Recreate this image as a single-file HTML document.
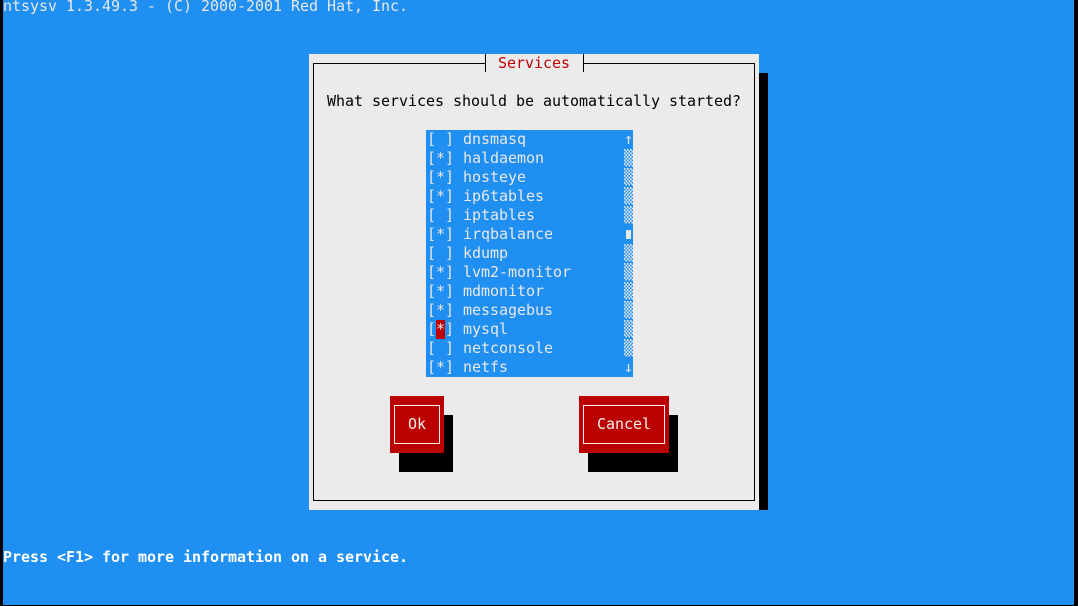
<!DOCTYPE html>
<html><head><meta charset="utf-8"><style>
*{margin:0;padding:0}
body{width:1078px;height:606px;overflow:hidden;background:#1f8ff2;position:relative;font-family:"DejaVu Sans Mono","Liberation Mono",monospace;font-size:15px;line-height:19px;letter-spacing:-0.03px}
.a{position:absolute;white-space:pre}
</style></head><body>
<div class="a" style="left:0;top:0;width:3px;height:606px;background:#000"></div>
<div class="a" style="right:0;top:0;width:4px;height:606px;background:#000"></div>
<div class="a" style="left:0;top:605px;width:1078px;height:1px;background:#000"></div>
<div class="a" style="left:3px;top:-3px;color:#e8e8e8">ntsysv 1.3.49.3 - (C) 2000-2001 Red Hat, Inc.</div>

<div class="a" style="left:759px;top:73px;width:9px;height:437px;background:#000"></div>
<div class="a" style="left:309px;top:54px;width:450px;height:456px;background:#ebebeb"></div>
<div class="a" style="left:313px;top:63px;width:440px;height:436px;border:1px solid #000"></div>
<div class="a" style="left:485px;top:54px;width:97px;height:18px;background:#ebebeb;border-left:1px solid #000;border-right:1px solid #000"></div>
<div class="a" style="left:498px;top:54px;color:#c00000">Services</div>
<div class="a" style="left:327px;top:92px;color:#000">What services should be automatically started?</div>

<div class="a" style="left:426px;top:130px;width:207px;height:247px;background:#1f8ff2"></div>
<div class="a" style="left:427px;top:130px;color:#e8e8e8">[ ] dnsmasq
[*] haldaemon
[*] hosteye
[*] ip6tables
[ ] iptables
[*] irqbalance
[ ] kdump
[*] lvm2-monitor
[*] mdmonitor
[*] messagebus
[ ] mysql
[ ] netconsole
[*] netfs</div>
<div class="a" style="left:436px;top:320px;width:9px;height:19px;background:#c00000;color:#e8e8e8;text-align:center">*</div>
<div class="a" style="left:624px;top:130px;width:9px;color:#e8e8e8;text-align:center">↑
▒
▒
▒
▒
 
▒
▒
▒
▒
▒
▒
↓</div>
<div class="a" style="left:626px;top:230px;width:5px;height:9px;background:#e8e8e8"></div>

<div class="a" style="left:399px;top:415px;width:54px;height:57px;background:#000"></div>
<div class="a" style="left:390px;top:396px;width:54px;height:57px;background:#bb0000"></div>
<div class="a" style="left:394px;top:405px;width:44px;height:37px;border:1px solid #f0f0f0;color:#f0f0f0;text-align:center;line-height:37px">Ok</div>

<div class="a" style="left:588px;top:415px;width:90px;height:57px;background:#000"></div>
<div class="a" style="left:579px;top:396px;width:90px;height:57px;background:#bb0000"></div>
<div class="a" style="left:583px;top:405px;width:80px;height:37px;border:1px solid #f0f0f0;color:#f0f0f0;text-align:center;line-height:37px">Cancel</div>

<div class="a" style="left:3px;top:548px;color:#fff;font-weight:bold">Press &lt;F1&gt; for more information on a service.</div>
</body></html>
